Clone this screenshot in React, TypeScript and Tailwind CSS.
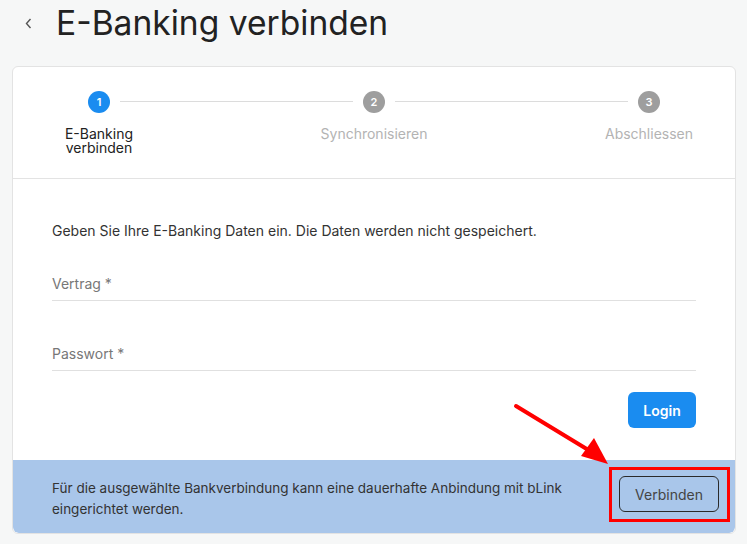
import React from "react";

function Step({ n, label, active, labelW }: { n: number; label: string; active?: boolean; labelW: string }) {
  return (
    <div className="flex w-[22px] flex-col items-center">
      <div
        className={
          "flex h-[22px] w-[22px] shrink-0 items-center justify-center rounded-full text-[11px] font-semibold text-white " +
          (active ? "bg-[#1a8cf0]" : "bg-[#9e9e9e]")
        }
      >
        {n}
      </div>
      <div
        className={
          "mt-[14px] shrink-0 text-center text-[14px] leading-[13.5px] " +
          labelW +
          " " +
          (active ? "text-[#222]" : "text-[#b3b3b3]")
        }
      >
        {label}
      </div>
    </div>
  );
}

export default function App() {
  return (
    <div
      className="relative min-h-[544px] w-full bg-[#f6f7f7] pb-[11px]"
      style={{ fontFamily: "Inter, 'Noto Sans', sans-serif" }}
    >
      <div className="flex h-[66px] items-start">
        <div className="ml-[25px] mt-[18px] flex h-[10px] w-[7px] items-center">
          <svg width="7" height="11" viewBox="0 0 7 11" fill="none">
            <path d="M5.5 1 L1.5 5.5 L5.5 10" stroke="#555" strokeWidth="1.4" />
          </svg>
        </div>
        <h1 className="ml-[24px] mt-[3px] text-[33.6px] font-normal leading-[40px] text-[#222]">
          E-Banking verbinden
        </h1>
      </div>

      <div className="mx-[12px] w-[724px] overflow-hidden rounded-[6px] border border-[#e3e3e3] bg-white">
        <div className="h-[112px] border-b border-[#e3e3e3] px-[75px] pt-[24px]">
          <div className="flex items-start">
            <Step n={1} label="E-Banking verbinden" active labelW="w-[76px]" />
            <div className="mx-[10px] mt-[10px] h-px flex-1 bg-[#dcdcdc]" />
            <Step n={2} label="Synchronisieren" labelW="w-[120px]" />
            <div className="mx-[10px] mt-[10px] h-px flex-1 bg-[#dcdcdc]" />
            <Step n={3} label="Abschliessen" labelW="w-[100px]" />
          </div>
        </div>

        <div className="px-[39px] pt-[42px] pb-[32px]">
          <p className="text-[14px] leading-[20px] text-[#333]">
            Geben Sie Ihre E-Banking Daten ein. Die Daten werden nicht gespeichert.
          </p>
          <div className="mt-[33px] border-b border-[#e0e0e0] pb-[6px] text-[14px] leading-[20px] text-[#777]">
            Vertrag *
          </div>
          <div className="mt-[43px] border-b border-[#e0e0e0] pb-[6px] text-[14px] leading-[20px] text-[#777]">
            Passwort *
          </div>
          <div className="mt-[21px] flex justify-end">
            <button className="h-[36px] w-[68px] rounded-[6px] bg-[#1a8cf0] text-[14px] font-semibold text-white">
              Login
            </button>
          </div>
        </div>

        <div className="flex h-[73px] items-start rounded-b-[6px] bg-[#a9c6ea] pl-[39px] pr-[16px]">
          <p className="mt-[18px] flex-1 pr-[40px] text-[13.5px] leading-[21px] text-[#333]">
            Für die ausgewählte Bankverbindung kann eine dauerhafte Anbindung mit bLink eingerichtet werden.
          </p>
          <div className="relative mt-[16px]">
            <button className="h-[36px] w-[100px] rounded-[6px] border border-[#2a2a2a] text-[14px] text-[#444]">
              Verbinden
            </button>
            <div className="pointer-events-none absolute -left-[10px] -right-[11px] -top-[9px] -bottom-[10px] border-[3px] border-[#ff0000]" />
          </div>
        </div>
      </div>

      <svg
        className="pointer-events-none absolute left-0 top-0"
        width="747"
        height="544"
        viewBox="0 0 747 544"
      >
        <line x1="516" y1="406" x2="590" y2="451" stroke="#ff0000" strokeWidth="4" strokeLinecap="round" />
        <polygon points="608,464 581,456 594,438" fill="#ff0000" />
      </svg>
    </div>
  );
}
